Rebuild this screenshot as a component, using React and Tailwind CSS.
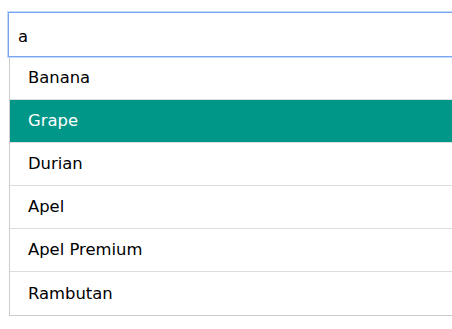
import { useState } from "react";

const fruits = ["Banana", "Grape", "Durian", "Apel", "Apel Premium", "Rambutan"];

export default function App() {
  const [query, setQuery] = useState("a");
  const active = "Grape";

  return (
    <div className="w-[452px] h-[329px] overflow-hidden bg-white font-['DejaVu_Sans',Verdana,sans-serif]">
      <div className="pt-3 pl-2 w-[560px]">
        {/* search box */}
        <input
          value={query}
          onChange={(e) => setQuery(e.target.value)}
          className="block w-full h-[45px] pl-[9px] pt-[3px] text-[16.4px] text-black border border-[#79a6f2] outline outline-1 outline-[#c4d8fb] bg-white"
        />

        {/* suggestions */}
        <ul className="ml-px border border-t-0 border-[#cccccc]">
          {fruits.map((f, i) => (
            <li
              key={f}
              className={`h-[43px] flex items-center pl-[18px] pt-px text-[16.4px] ${
                i < fruits.length - 1 ? "border-b border-[#dddddd]" : ""
              } ${f === active ? "bg-[#009688] text-white" : "text-black"}`}
            >
              {f}
            </li>
          ))}
        </ul>
      </div>
    </div>
  );
}
